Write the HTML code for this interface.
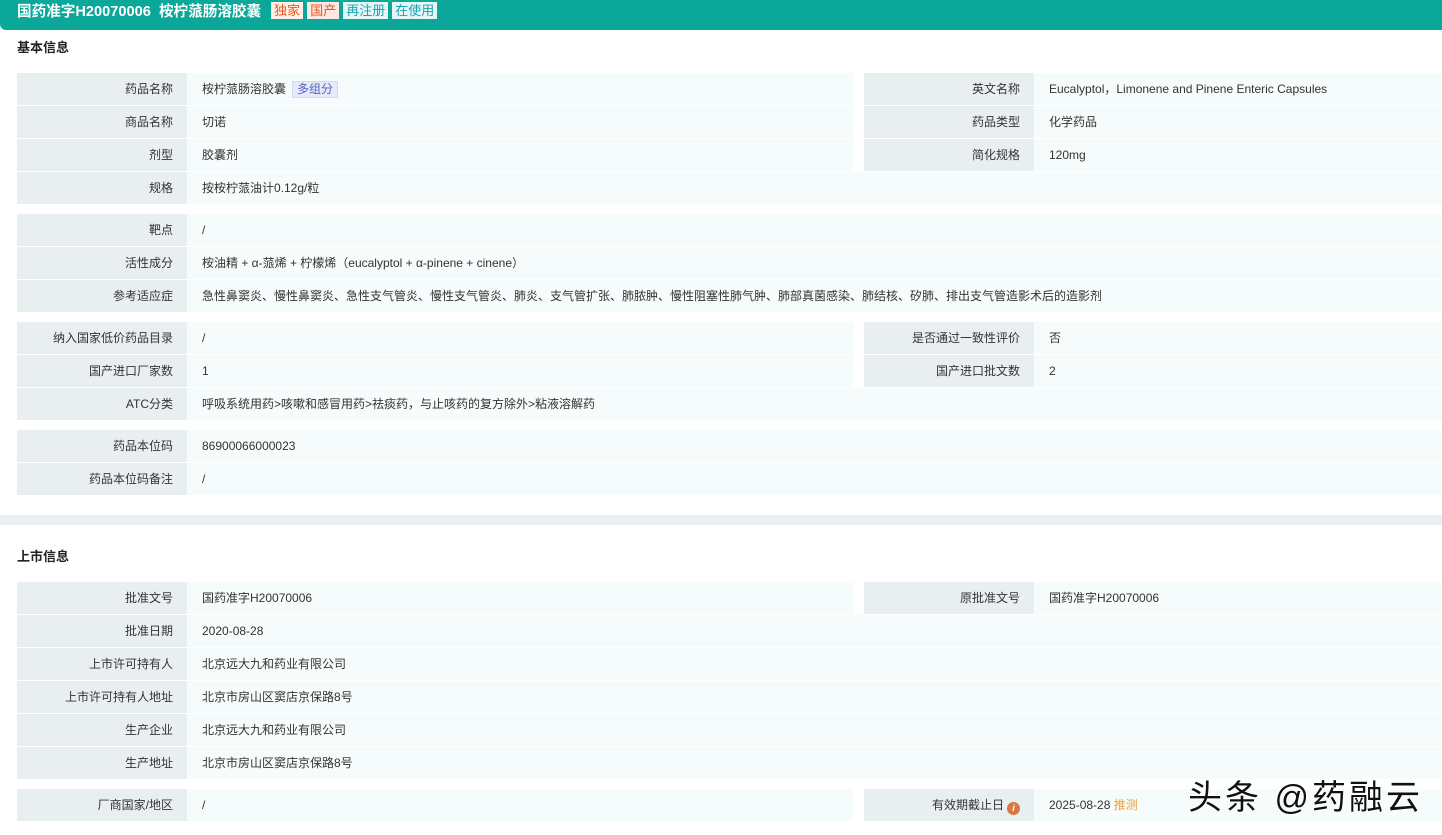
<!DOCTYPE html>
<html><head><meta charset="utf-8"><style>
*{margin:0;padding:0;box-sizing:border-box}
body{width:1442px;height:835px;overflow:hidden;background:#fff;font-family:"Liberation Sans","Noto Sans CJK SC",sans-serif;font-size:12px;color:#333;position:relative}
.hd{position:absolute;left:0;top:0;width:1442px;height:30px;background:#0ba89a;color:#fff;font-weight:bold;font-size:14.6px;line-height:25px;padding-left:17px;border-radius:0 0 0 6px}
.tag{display:inline-block;font-weight:normal;font-size:13px;line-height:17px;padding:0 3px;margin-left:4px;vertical-align:1px}
.t1{background:#fff0e8;color:#e8561f;margin-left:6px}.t2{background:#fde9e2;color:#e8561f}.t3,.t4{background:#e6f6f7;color:#17a3b0}
.sec{position:absolute;left:17px;font-weight:bold;font-size:13px;color:#222}
.gap{position:absolute;left:0;top:515px;width:1442px;height:10px;background:#eaeef1}
.l{position:absolute;background:#e9eff1;text-align:right;padding-right:14px;height:32px;line-height:33px;color:#333}
.v{position:absolute;background:#f6fbfc;padding-left:15px;height:32px;line-height:33px;color:#333}
.mz{display:inline-block;background:#e8eafb;color:#5565c0;border:1px solid #d5dbf5;line-height:15px;padding:0 4px;margin-left:6px}
.i{display:inline-block;width:13px;height:13px;border-radius:50%;background:#d97843;color:#fff;font-size:9px;line-height:13px;text-align:center;vertical-align:-2px;margin-left:3px;font-style:italic;font-weight:bold}
.wm{position:absolute;left:1188px;top:770px;font-size:34px;color:#111;letter-spacing:3px;text-shadow:1px 1px 0 #fff,-1px -1px 0 #fff}
</style></head><body>
<div class="hd">国药准字H20070006&nbsp;&nbsp;桉柠蒎肠溶胶囊&nbsp;<span class="tag t1">独家</span><span class="tag t2">国产</span><span class="tag t3">再注册</span><span class="tag t4">在使用</span></div>
<div class="sec" style="top:37px">基本信息</div>
<div class="gap"></div>
<div class="sec" style="top:546px">上市信息</div>

<div class="l" style="left:17px;top:73px;width:170px">药品名称</div><div class="v" style="left:187px;top:73px;width:666px">桉柠蒎肠溶胶囊<span class="mz">多组分</span></div>
<div class="l" style="left:864px;top:73px;width:170px">英文名称</div><div class="v" style="left:1034px;top:73px;width:408px">Eucalyptol，Limonene and Pinene Enteric Capsules</div>
<div class="l" style="left:17px;top:106px;width:170px">商品名称</div><div class="v" style="left:187px;top:106px;width:666px">切诺</div>
<div class="l" style="left:864px;top:106px;width:170px">药品类型</div><div class="v" style="left:1034px;top:106px;width:408px">化学药品</div>
<div class="l" style="left:17px;top:139px;width:170px">剂型</div><div class="v" style="left:187px;top:139px;width:666px">胶囊剂</div>
<div class="l" style="left:864px;top:139px;width:170px">简化规格</div><div class="v" style="left:1034px;top:139px;width:408px">120mg</div>
<div class="l" style="left:17px;top:172px;width:170px">规格</div><div class="v" style="left:187px;top:172px;width:1255px">按桉柠蒎油计0.12g/粒</div>

<div class="l" style="left:17px;top:214px;width:170px">靶点</div><div class="v" style="left:187px;top:214px;width:1255px">/</div>
<div class="l" style="left:17px;top:247px;width:170px">活性成分</div><div class="v" style="left:187px;top:247px;width:1255px">桉油精 + α-蒎烯 + 柠檬烯（eucalyptol + α-pinene + cinene）</div>
<div class="l" style="left:17px;top:280px;width:170px">参考适应症</div><div class="v" style="left:187px;top:280px;width:1255px">急性鼻窦炎、慢性鼻窦炎、急性支气管炎、慢性支气管炎、肺炎、支气管扩张、肺脓肿、慢性阻塞性肺气肿、肺部真菌感染、肺结核、矽肺、排出支气管造影术后的造影剂</div>

<div class="l" style="left:17px;top:322px;width:170px">纳入国家低价药品目录</div><div class="v" style="left:187px;top:322px;width:666px">/</div>
<div class="l" style="left:864px;top:322px;width:170px">是否通过一致性评价</div><div class="v" style="left:1034px;top:322px;width:408px">否</div>
<div class="l" style="left:17px;top:355px;width:170px">国产进口厂家数</div><div class="v" style="left:187px;top:355px;width:666px">1</div>
<div class="l" style="left:864px;top:355px;width:170px">国产进口批文数</div><div class="v" style="left:1034px;top:355px;width:408px">2</div>
<div class="l" style="left:17px;top:388px;width:170px">ATC分类</div><div class="v" style="left:187px;top:388px;width:1255px">呼吸系统用药&gt;咳嗽和感冒用药&gt;祛痰药，与止咳药的复方除外&gt;粘液溶解药</div>

<div class="l" style="left:17px;top:430px;width:170px">药品本位码</div><div class="v" style="left:187px;top:430px;width:1255px">86900066000023</div>
<div class="l" style="left:17px;top:463px;width:170px">药品本位码备注</div><div class="v" style="left:187px;top:463px;width:1255px">/</div>

<div class="l" style="left:17px;top:582px;width:170px">批准文号</div><div class="v" style="left:187px;top:582px;width:666px">国药准字H20070006</div>
<div class="l" style="left:864px;top:582px;width:170px">原批准文号</div><div class="v" style="left:1034px;top:582px;width:408px">国药准字H20070006</div>
<div class="l" style="left:17px;top:615px;width:170px">批准日期</div><div class="v" style="left:187px;top:615px;width:1255px">2020-08-28</div>
<div class="l" style="left:17px;top:648px;width:170px">上市许可持有人</div><div class="v" style="left:187px;top:648px;width:1255px">北京远大九和药业有限公司</div>
<div class="l" style="left:17px;top:681px;width:170px">上市许可持有人地址</div><div class="v" style="left:187px;top:681px;width:1255px">北京市房山区窦店京保路8号</div>
<div class="l" style="left:17px;top:714px;width:170px">生产企业</div><div class="v" style="left:187px;top:714px;width:1255px">北京远大九和药业有限公司</div>
<div class="l" style="left:17px;top:747px;width:170px">生产地址</div><div class="v" style="left:187px;top:747px;width:1255px">北京市房山区窦店京保路8号</div>

<div class="l" style="left:17px;top:789px;width:170px">厂商国家/地区</div><div class="v" style="left:187px;top:789px;width:666px">/</div>
<div class="l" style="left:864px;top:789px;width:170px">有效期截止日<span class="i">i</span></div><div class="v" style="left:1034px;top:789px;width:408px">2025-08-28 <span style="color:#f0a040">推测</span></div>
<div class="wm">头条 @药融云</div>
</body></html>
